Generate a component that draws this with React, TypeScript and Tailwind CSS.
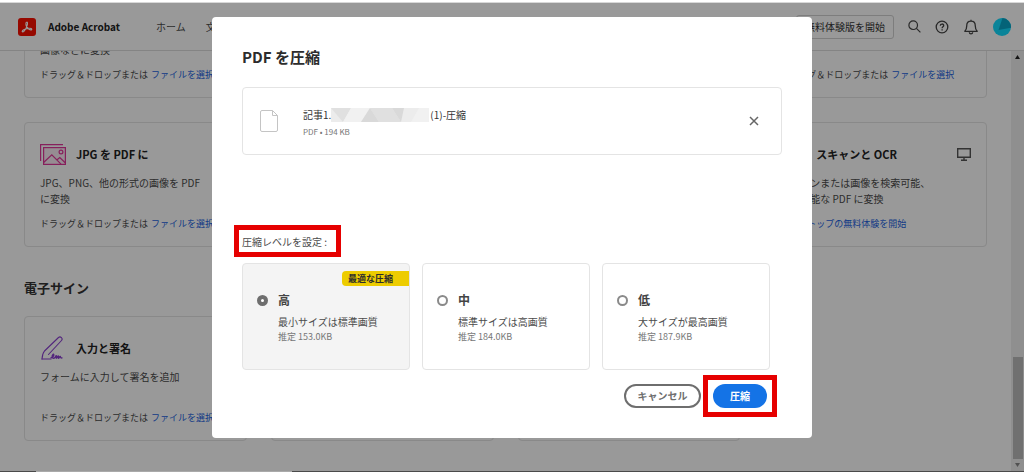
import { useState } from "react";

const page = "font-['Noto_Sans_CJK_JP','Noto_Sans',sans-serif] text-[#4b4b4b]";
const card = "flex flex-col rounded border border-[#e4e4e4] bg-white px-[15px] pt-[19px] pb-[14px]";
const highlight = "border-[5px] border-[#e60000]";

type Tool = {
  title: string;
  lines: string[];
  icon: "image" | "sign";
  desktop?: boolean;
};

const convertTools: Tool[] = [
  { title: "PDF を書き出し", lines: ["PDF を Word、Excel、", "画像などに変換"], icon: "image" },
  { title: "PDF を Word に", lines: ["PDF を Word に変換"], icon: "image" },
  { title: "PDF を JPG に", lines: ["PDF を JPG に変換"], icon: "image" },
  { title: "PDF を Excel に", lines: ["PDF を Excel に変換"], icon: "image" },
];

const createTools: Tool[] = [
  { title: "JPG を PDF に", lines: ["JPG、PNG、他の形式の画像を PDF", "に変換"], icon: "image" },
  { title: "Word を PDF に", lines: ["Word を PDF に変換"], icon: "image" },
  { title: "Excel を PDF に", lines: ["Excel を PDF に変換"], icon: "image" },
  { title: "スキャンと OCR", lines: ["スキャンまたは画像を検索可能、", "編集可能な PDF に変換"], icon: "image", desktop: true },
];

const signTools: Tool[] = [
  { title: "入力と署名", lines: ["フォームに入力して署名を追加"], icon: "sign" },
  { title: "署名を依頼", lines: ["他のユーザーに署名を依頼"], icon: "sign" },
  { title: "テンプレート", lines: ["テンプレートを作成"], icon: "sign" },
];

const levels = [
  { id: "high", name: "高", desc: "最小サイズは標準画質", size: "推定 153.0KB", best: true },
  { id: "mid", name: "中", desc: "標準サイズは高画質", size: "推定 184.0KB" },
  { id: "low", name: "低", desc: "大サイズが最高画質", size: "推定 187.9KB" },
];

function AcrobatLogo() {
  return (
    <svg viewBox="0 0 18 18" className="size-[18px] shrink-0" aria-hidden="true">
      <rect width="18" height="18" rx="3" fill="#fa0f00" />
      <path
        d="M8.6 4.2c.9-.3 1.1 1 .7 2.6-.5 2-1.9 5.1-3.4 6.6-.8.8-1.9.6-1.7-.1.3-1.1 3.1-2.4 5.6-2.8 1.8-.3 3.8-.1 4 .7.2.9-1.6.9-3.1-.2C9 9.8 7.9 7.5 7.9 5.7c0-.9.2-1.4.7-1.5z"
        fill="none"
        stroke="#fff"
        strokeWidth="1.1"
      />
    </svg>
  );
}

function ImageIcon() {
  return (
    <svg viewBox="0 0 26 21" className="h-[21px] w-[26px] shrink-0" fill="none" stroke="#e0369a" strokeWidth="1.2" aria-hidden="true">
      <path d="M.6 17V.6H23" />
      <rect x="3.6" y="3.6" width="21.8" height="16.8" fill="#f8d5e8" fillOpacity=".5" />
      <circle cx="21" cy="8" r="1.9" />
      <path d="M3.6 18.500l8.200-7.700 9.200 9.400M16.800 16l3-2.500 5.400 5.300" />
    </svg>
  );
}

function SignIcon() {
  return (
    <svg viewBox="0 0 26 24" className="h-6 w-[26px] shrink-0" fill="none" stroke="#8a3fd0" strokeWidth="1.1" strokeLinejoin="round" strokeLinecap="round" aria-hidden="true">
      <path d="M2 23c.2-3.500.8-6 2.500-8L18.500 1.500c1-.9 2-.8 2.900.1.900.9 1 1.900.1 2.900L8.500 18.500" />
      <path d="M2 23h9M16.500 3.500" />
      <path d="M11 21.800c2.200-.8 3.400-2.800 2.600-3.500-1.200-.3-2.600 4 .3 3.900 1.600-.3 1.700-2.500 2.400-2.500.5.2-.4 2.500 0 2.600.6 0 1.200-2.500 2-2.300.5.2-.4 2.300.2 2.300s1.100-2 1.700-1.900c.4.2 0 1.900 1.800 1.500" strokeWidth="1.4" />
    </svg>
  );
}

function ToolCard({ tool }: { tool: Tool }) {
  return (
    <section className={card}>
      <div className="flex h-6 items-center gap-[10px]">
        {tool.icon === "image" ? <ImageIcon /> : <SignIcon />}
        <h3 className="text-[11px] font-bold whitespace-nowrap text-[#222]">{tool.title}</h3>
        {tool.desktop && (
          <svg viewBox="0 0 14 13" className="ml-auto h-[13px] w-[14px] shrink-0" fill="none" stroke="#555" strokeWidth="1.4" aria-hidden="true">
            <path d="M.7.7h12.600v8.600H.7zM7 9.300v2.500M4 12.300h6" />
          </svg>
        )}
      </div>
      <div className="mt-[9px] h-8 text-[10px] leading-4 whitespace-nowrap">
        {tool.lines.map((line) => (
          <p key={line}>{line}</p>
        ))}
      </div>
      <p className="mt-[9px] text-[9px] leading-4 whitespace-nowrap">
        {tool.desktop ? (
          <a href="#trial" className="text-[#1b5fe0]">デスクトップの無料体験を開始</a>
        ) : (
          <>
            ドラッグ＆ドロップまたは <a href="#select" className="ml-px text-[#1b5fe0]">ファイルを選択</a>
          </>
        )}
      </p>
    </section>
  );
}

function Header() {
  return (
    <header className="flex h-12 shrink-0 items-center border-b border-[#dcdcdc] bg-white pr-[13px] pl-[18px]">
      <AcrobatLogo />
      <span className="ml-3 text-[10px] font-bold text-[#222]">Adobe Acrobat</span>
      <nav className="ml-9 flex gap-5 text-[10px]">
        <a href="#home">ホーム</a>
        <a href="#docs">文書</a>
      </nav>
      <div className="ml-auto flex items-center gap-[14px] text-[#444]">
        <button type="button" className="h-6 rounded-[3px] border border-[#d0d0d0] px-2 text-[10px] text-[#333]">
          無料体験版を開始
        </button>
        <button type="button" aria-label="検索">
          <svg viewBox="0 0 13 13" className="size-[13px]" fill="none" stroke="currentColor" strokeWidth="1.2">
            <circle cx="5.2" cy="5.2" r="4.3" />
            <path d="M8.400 8.400l4 4" />
          </svg>
        </button>
        <button type="button" aria-label="ヘルプ">
          <svg viewBox="0 0 14 14" className="size-[14px]" fill="none" stroke="currentColor" strokeWidth="1.3">
            <circle cx="7" cy="7" r="5.8" />
            <path d="M5.300 5.700c0-2.200 3.400-2.200 3.400-.2 0 1.300-1.600 1.200-1.600 2.700M7.100 9.200v1.300" />
          </svg>
        </button>
        <button type="button" aria-label="通知">
          <svg viewBox="0 0 16 16" className="size-4" fill="none" stroke="currentColor" strokeWidth="1.3" strokeLinejoin="round">
            <path d="M1.800 12.300c1.500-1.300 1.900-2.500 1.900-5.300C3.700 4.300 5.400 2.200 8 2.200s4.300 2.100 4.300 4.800c0 2.800.4 4 1.900 5.300zM8 .8v1.400M6.300 13.200c.2 2.300 3.200 2.300 3.400 0" />
          </svg>
        </button>
        <button type="button" aria-label="アカウント">
          <svg viewBox="0 0 18 18" className="size-[18px]">
            <circle cx="9" cy="9" r="9" fill="#12dcff" />
            <path d="M9.500.1A9 9 0 0 1 18 9.800L5.500 12z" fill="#08a6c8" />
          </svg>
        </button>
      </div>
    </header>
  );
}

function ScrollBar() {
  return (
    <div className="flex w-[13px] shrink-0 flex-col items-center justify-end bg-[#eee] pt-1" aria-hidden="true">
      <svg viewBox="0 0 5 4" className="mb-auto h-1 w-[5px]">
        <path d="M0 4L2.500 0 5 4z" fill="#222" />
      </svg>
      <div className="h-[102px] w-[10px] bg-[#bbb]" />
      <svg viewBox="0 0 5 4" className="my-1 h-1 w-[5px]">
        <path d="M0 0h5L2.500 4z" fill="#888" />
      </svg>
    </div>
  );
}

function CompressDialog() {
  const [level, setLevel] = useState("high");

  return (
    <div role="dialog" aria-labelledby="dialog-title" className="w-full max-w-[600px] rounded bg-white px-[30px] pt-7 pb-[21px]">
      <h1 id="dialog-title" className="text-[15px] leading-6 font-bold text-[#2c2c2c]">PDF を圧縮</h1>

      {/* File */}
      <div className="mt-[18px] flex h-[68px] items-center rounded border border-[#e4e4e4] pr-[22px] pl-[17px]">
        <svg viewBox="0 0 18 22" className="h-[22px] w-[18px] shrink-0" fill="none" stroke="#c4c4c4" aria-hidden="true">
          <path d="M2 .5h10.500l5 5V20a1.500 1.500 0 0 1-1.500 1.500H2A1.500 1.500 0 0 1 .5 20V2A1.500 1.500 0 0 1 2 .5zM12.500.5v5h5" />
        </svg>
        <div className="ml-[25px] pt-1">
          <p className="flex items-center text-[10px] leading-4 text-[#333]">
            記事1.
            <svg viewBox="0 0 98 14" preserveAspectRatio="none" className="mr-px h-[14px] w-[98px]" aria-hidden="true">
              <path fill="#ececec" d="M0 0h98v14H0z" />
              <path fill="#e0e0e0" d="M0 0h20l-8 14zM39 0h22l9 14H48z" />
              <path fill="#f1f1f1" d="M20 0h19l-9 14H12zM88 0h10v14H80z" />
              <path fill="#d9d9d9" d="M39 0l9 14H30zM61 0h12l-3 14z" />
            </svg>
            (1)-圧縮
          </p>
          <p className="mt-px text-[8px] leading-4 text-[#777]">PDF • 194 KB</p>
        </div>
        <button type="button" aria-label="削除" className="ml-auto">
          <svg viewBox="0 0 10 10" className="size-[10px]" stroke="#666" strokeWidth="1.5">
            <path d="M1 1l8 8M9 1L1 9" />
          </svg>
        </button>
      </div>

      {/* Compression level */}
      <div className={`${highlight} mt-[70px] -ml-2 flex h-8 w-[107px] items-center pl-[3px] text-[10px] whitespace-nowrap`}>
        圧縮レベルを設定 :
      </div>
      <div role="radiogroup" aria-label="圧縮レベルを設定" className="mt-[6px] mr-3 grid grid-cols-3 gap-3">
        {levels.map((l) => (
          <label
            key={l.id}
            className={`relative flex h-[107px] items-start gap-[10px] rounded border border-[#e4e4e4] pt-7 pl-[14px] ${level === l.id ? "bg-[#f4f4f4]" : "bg-white"}`}
          >
            <input
              type="radio"
              name="level"
              checked={level === l.id}
              onChange={() => setLevel(l.id)}
              className="mt-[3px] size-[11px] shrink-0 appearance-none rounded-full border-2 border-[#8a8a8a] bg-white checked:border-4 checked:border-[#6e6e6e]"
            />
            <span className="flex flex-col whitespace-nowrap">
              <span className="text-[12px] leading-4 font-bold text-[#444]">{l.name}</span>
              <span className="mt-[6px] text-[10px] leading-4">{l.desc}</span>
              <span className="text-[9px] leading-[14px] text-[#777]">{l.size}</span>
            </span>
            {l.best && (
              <span className="absolute top-[7px] right-0 h-[15px] w-[67px] rounded-l-sm bg-[#edcc00] pl-[6px] text-[9px] leading-[15px] font-bold text-[#2c2c2c]">
                最適な圧縮
              </span>
            )}
          </label>
        ))}
      </div>

      {/* Actions */}
      <div className="mt-[5px] mr-[5px] flex items-center justify-end gap-[2px] text-[10px] font-bold">
        <button type="button" className="h-6 w-[77px] rounded-full border-2 border-[#6e6e6e] leading-5 text-[#6e6e6e]">
          キャンセル
        </button>
        <div className={`${highlight} flex h-[42px] items-center p-[5px]`}>
          <button type="button" className="h-6 w-[54px] rounded-full bg-[#1473e6] leading-6 text-white">
            圧縮
          </button>
        </div>
      </div>
    </div>
  );
}

export default function App() {
  return (
    <div className={`${page} flex h-screen flex-col overflow-hidden bg-white`}>
      <div className="h-[3px] shrink-0 border-b border-[#d8d8d8]" />
      <div className="relative flex min-h-0 flex-1 flex-col">
        <Header />
        <div className="flex min-h-0 flex-1">
          {/* scrolled to the end of the tool list */}
          <main className="flex min-w-0 flex-1 flex-col justify-end overflow-hidden px-6 pb-[30px]">
            <div className="grid grid-cols-4 gap-6">
              {convertTools.map((t) => <ToolCard key={t.title} tool={t} />)}
              {createTools.map((t) => <ToolCard key={t.title} tool={t} />)}
            </div>
            <h2 className="mt-[29px] mb-4 text-[13px] leading-6 font-bold text-[#333]">電子サイン</h2>
            <div className="grid grid-cols-4 gap-6">
              {signTools.map((t) => <ToolCard key={t.title} tool={t} />)}
            </div>
          </main>
          <ScrollBar />
        </div>
        <div className="absolute inset-0 flex items-start justify-center bg-black/40 pt-[14px]">
          <CompressDialog />
        </div>
      </div>
      <div className="flex h-px shrink-0 bg-[#4a4a4a]">
        <div className="ml-9 w-1/4 bg-[#aaa]" />
      </div>
    </div>
  );
}
